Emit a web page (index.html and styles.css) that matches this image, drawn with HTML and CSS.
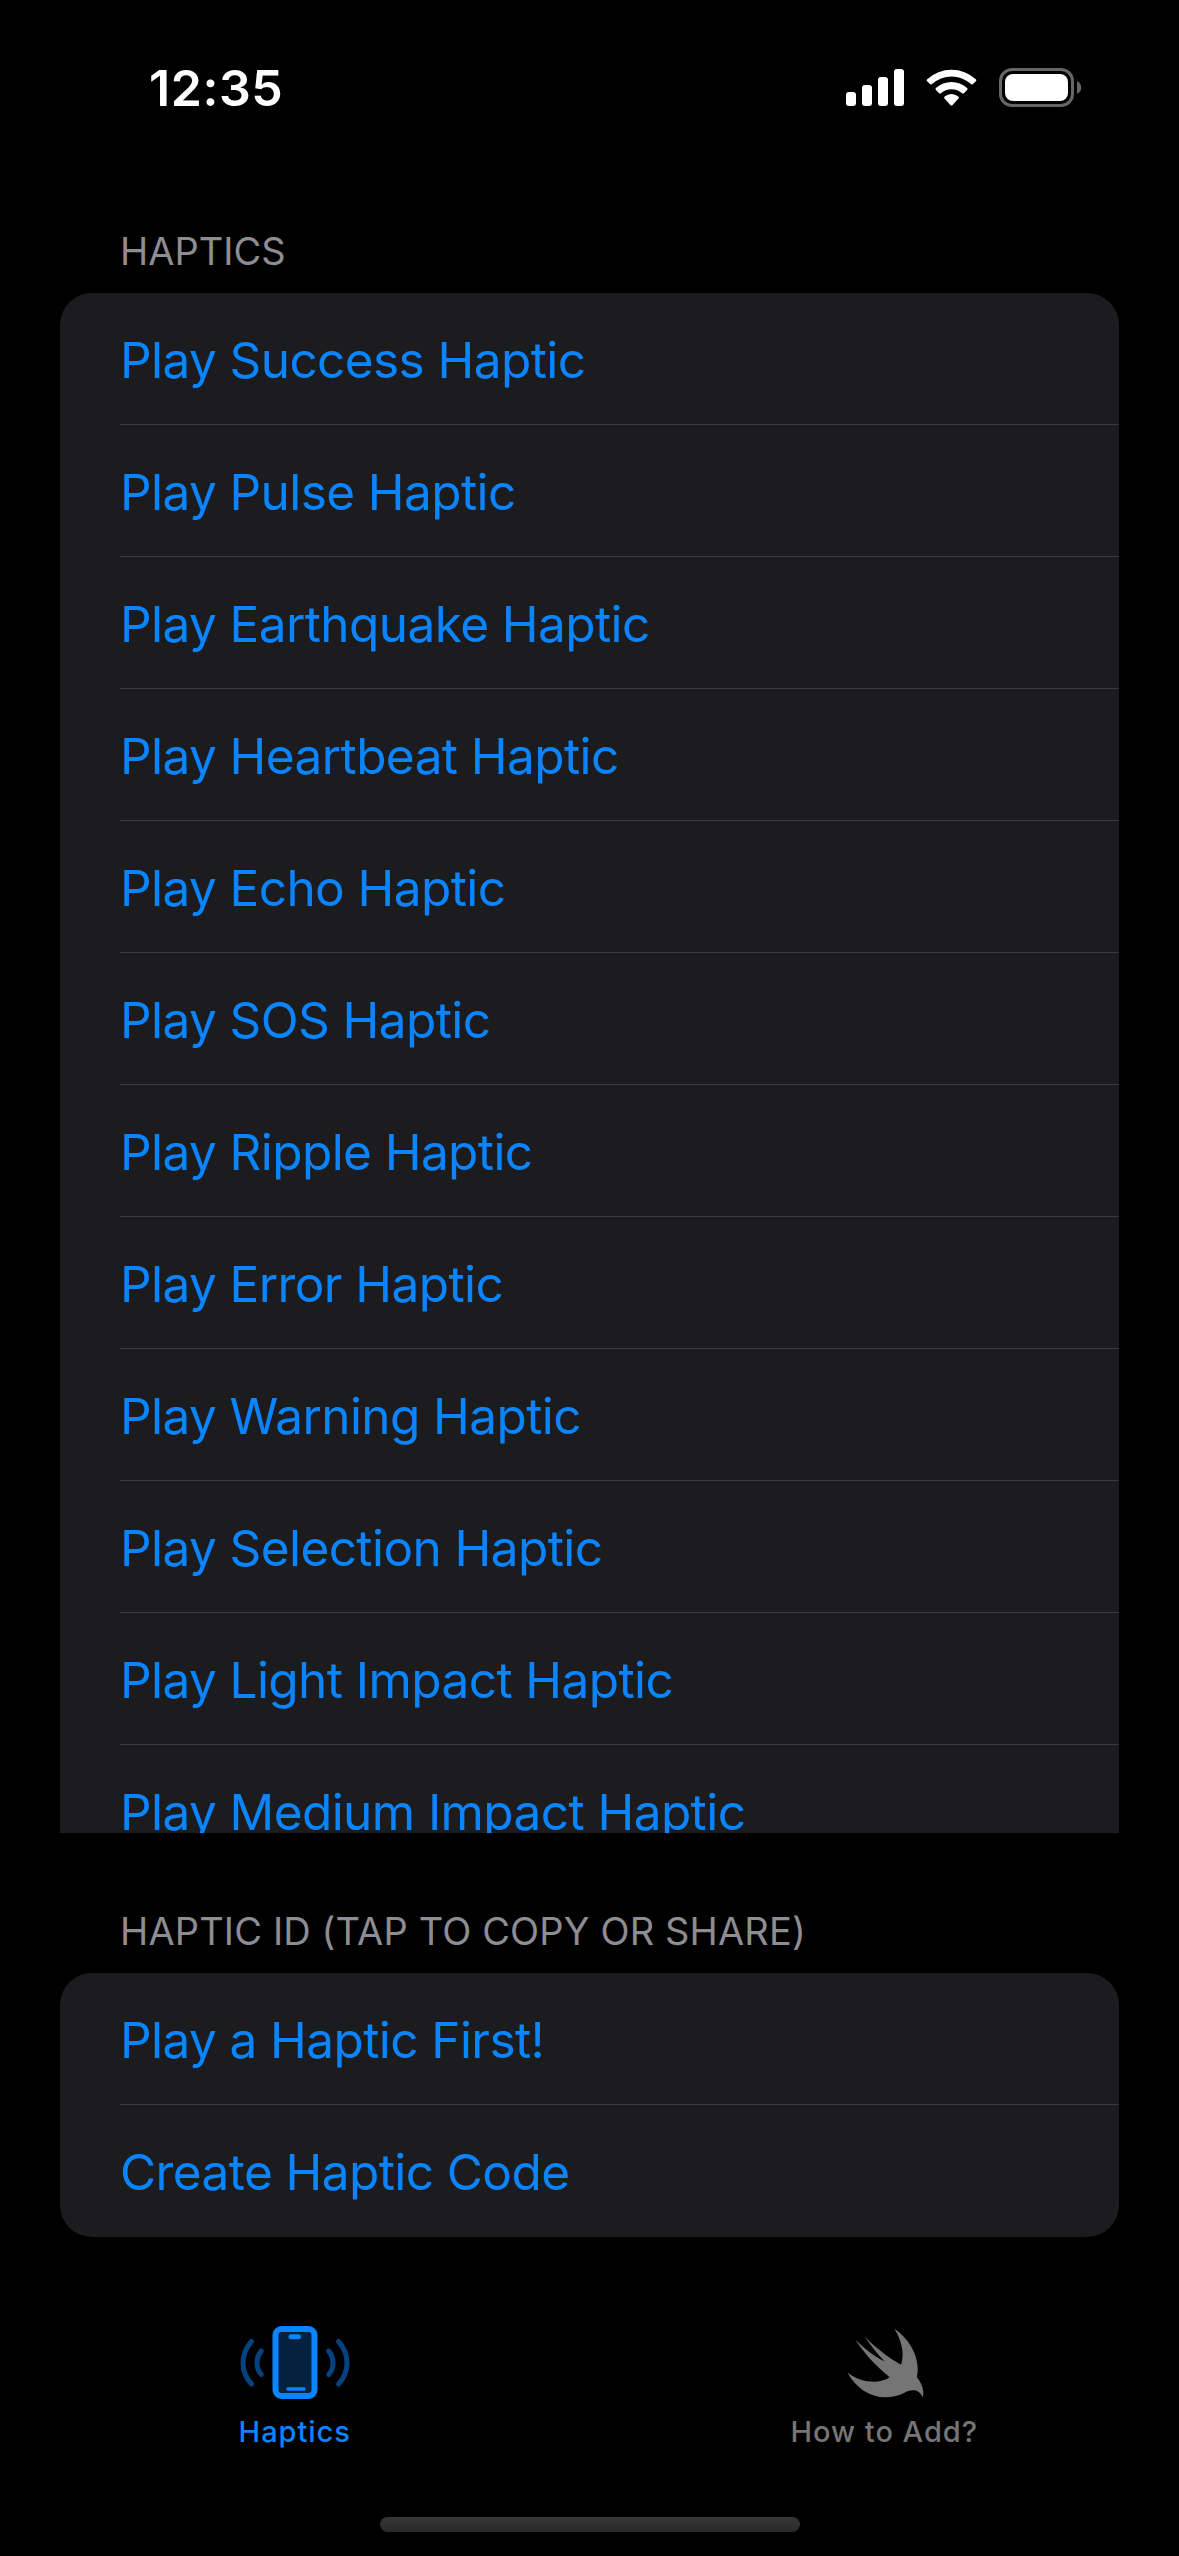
FILE: index.html
```html
<!DOCTYPE html>
<html lang="en">
<head>
<meta charset="utf-8">
<title>Haptics</title>
<link rel="stylesheet" href="styles.css">
</head>
<body>
<div class="screen">
  <header class="status-bar">
    <span class="time">12:35</span>
    <svg class="status-icons" viewBox="0 0 236 40" aria-hidden="true">
      <g fill="#fff">
        <rect x="0" y="24" width="10" height="14" rx="3"/>
        <rect x="16" y="17" width="10" height="21" rx="3"/>
        <rect x="32" y="9" width="10" height="29" rx="3"/>
        <rect x="48" y="1" width="10" height="37" rx="3"/>
        <path d="M81.200 11.200A36 36 0 0 1 129.800 11.200Q130.800 12.200 129.900 13.200L126.700 16.200Q125.900 16.900 125 16.100A28.500 28.500 0 0 0 86 16.100Q85.100 16.900 84.300 16.200L81.100 13.200Q80.200 12.200 81.200 11.200Z"/>
        <path d="M89.900 20A23.300 23.300 0 0 1 121.100 20Q122.100 21 121.100 22L117.800 25.300Q117 26 116.100 25.200A16 16 0 0 0 94.900 25.200Q94 26 93.200 25.300L89.900 22Q88.900 21 89.900 20Z"/>
        <path d="M98.700 28.600A10.500 10.500 0 0 1 112.300 28.600Q113.400 29.600 112.500 30.600L106.400 37.200Q105.500 38 104.600 37.200L98.500 30.600Q97.600 29.600 98.700 28.600Z"/>
        <rect x="159" y="6" width="63" height="27" rx="8"/>
      </g>
      <rect x="154.500" y="1.500" width="72" height="36" rx="11.500" fill="none" stroke="#666" stroke-width="3"/>
      <path d="M231 13Q235.200 15 235.200 19.500Q235.200 24 231 26Z" fill="#666"/>
    </svg>
  </header>

  <main class="content">
    <section class="group scroll-group">
      <h2 class="group-title">HAPTICS</h2>
      <ul class="list">
        <li class="row">Play Success Haptic</li>
        <li class="row">Play Pulse Haptic</li>
        <li class="row">Play Earthquake Haptic</li>
        <li class="row">Play Heartbeat Haptic</li>
        <li class="row">Play Echo Haptic</li>
        <li class="row">Play SOS Haptic</li>
        <li class="row">Play Ripple Haptic</li>
        <li class="row">Play Error Haptic</li>
        <li class="row">Play Warning Haptic</li>
        <li class="row">Play Selection Haptic</li>
        <li class="row">Play Light Impact Haptic</li>
        <li class="row">Play Medium Impact Haptic</li>
      </ul>
    </section>
    <section class="group id-group">
      <h2 class="group-title">HAPTIC ID (TAP TO COPY OR SHARE)</h2>
      <ul class="list">
        <li class="row">Play a Haptic First!</li>
        <li class="row">Create Haptic Code</li>
      </ul>
    </section>
  </main>

  <nav class="tab-bar">
    <a class="tab active">
      <svg class="tab-icon" viewBox="0 0 110 74" fill="none" stroke-linecap="round" aria-hidden="true">
        <rect x="35.500" y="3" width="39" height="67" rx="6" fill="#04213f" stroke="#0a84ff" stroke-width="6"/>
        <path d="M51 10.700H58.500" stroke="#0a84ff" stroke-width="5"/>
        <path d="M48 63H64" stroke="#0a84ff" stroke-width="3.500"/>
        <g stroke="#054280" stroke-width="5">
          <path d="M11.500 15.500Q3 25 3 37T11.500 58"/>
          <path d="M21.300 25Q17 30 17 37T21.300 48.500"/>
          <path d="M98.500 15.500Q107 25 107 37T98.500 58"/>
          <path d="M88.700 25Q93 30 93 37T88.700 48.500"/>
        </g>
      </svg>
      <span>Haptics</span>
    </a>
    <a class="tab">
      <svg class="tab-icon" viewBox="-18 0 110 74" aria-hidden="true">
        <path fill="#757575" d="M47.300 2.800C62.500 13 74 32 69.900 51.300C76 59 77 66 75.800 71.200C71.500 62.500 64 63.300 58 66.500C35 78 12 68 .4 46.500C14 57 32 58.500 42.700 51.300C28 39.500 17.500 27.500 8.300 13.800C17 22 27.500 31 37.700 35.500C30 27.500 23.500 19.500 17.300 10C27 20.500 41 31.500 54 38.700C58 26.500 54 13.500 47.300 2.800Z"/>
      </svg>
      <span>How to Add?</span>
    </a>
  </nav>
  <div class="home-indicator"></div>
</div>
</body>
</html>
```
FILE: styles.css
```css
* {
  box-sizing: border-box;
}

body {
  margin: 0;
  background: #000;
  font-family: Inter, "Liberation Sans", sans-serif;
}

.screen {
  display: flex;
  flex-direction: column;
  width: 1179px;
  height: 2556px;
  overflow: hidden;
  background: #000;
}

.status-bar {
  display: flex;
  justify-content: space-between;
  height: 177px;
  padding: 68px 97px 0 149px;
}

.time {
  color: #fff;
  font-size: 50px;
  font-weight: 600;
  letter-spacing: 0.55px;
  line-height: 40px;
}

.status-icons {
  width: 236px;
  height: 40px;
}

.content {
  padding: 0 60px;
}

.scroll-group {
  height: 1656px;
  overflow: hidden;
}

.group-title {
  height: 116px;
  margin: 0;
  padding: 50px 60px 0;
  color: #8d8d93;
  font-size: 38px;
  font-weight: 400;
  line-height: 48px;
  white-space: nowrap;
}

.id-group .group-title {
  height: 140px;
  padding-top: 74px;
  letter-spacing: 0.14px;
}

.list {
  margin: 0;
  padding: 0;
  overflow: hidden;
  border-radius: 32px;
  background: #1c1c1e;
  list-style: none;
}

.scroll-group .list {
  border-radius: 32px 32px 0 0;
}

.row {
  height: 132px;
  margin-left: 60px;
  padding-top: 36px;
  border-bottom: 1px solid #3d3d41;
  color: #0a84ff;
  font-size: 49.5px;
  letter-spacing: -0.58px;
  line-height: 62px;
  white-space: nowrap;
}

.row:last-child {
  border-bottom: 0;
}

.tab-bar {
  display: flex;
  height: 280px;
  padding-top: 89px;
}

.tab {
  display: flex;
  flex: 1;
  flex-direction: column;
  align-items: center;
  color: #757575;
  font-size: 29px;
  font-weight: 500;
  letter-spacing: 0.97px;
  line-height: 36px;
}

.tab.active {
  color: #0a84ff;
}

.tab-icon {
  width: 110px;
  height: 74px;
  margin-bottom: 14px;
}

.home-indicator {
  width: 420px;
  height: 15px;
  margin: 0 auto;
  border-radius: 8px;
  background: linear-gradient(#363636, #2a2a2a);
}
```
